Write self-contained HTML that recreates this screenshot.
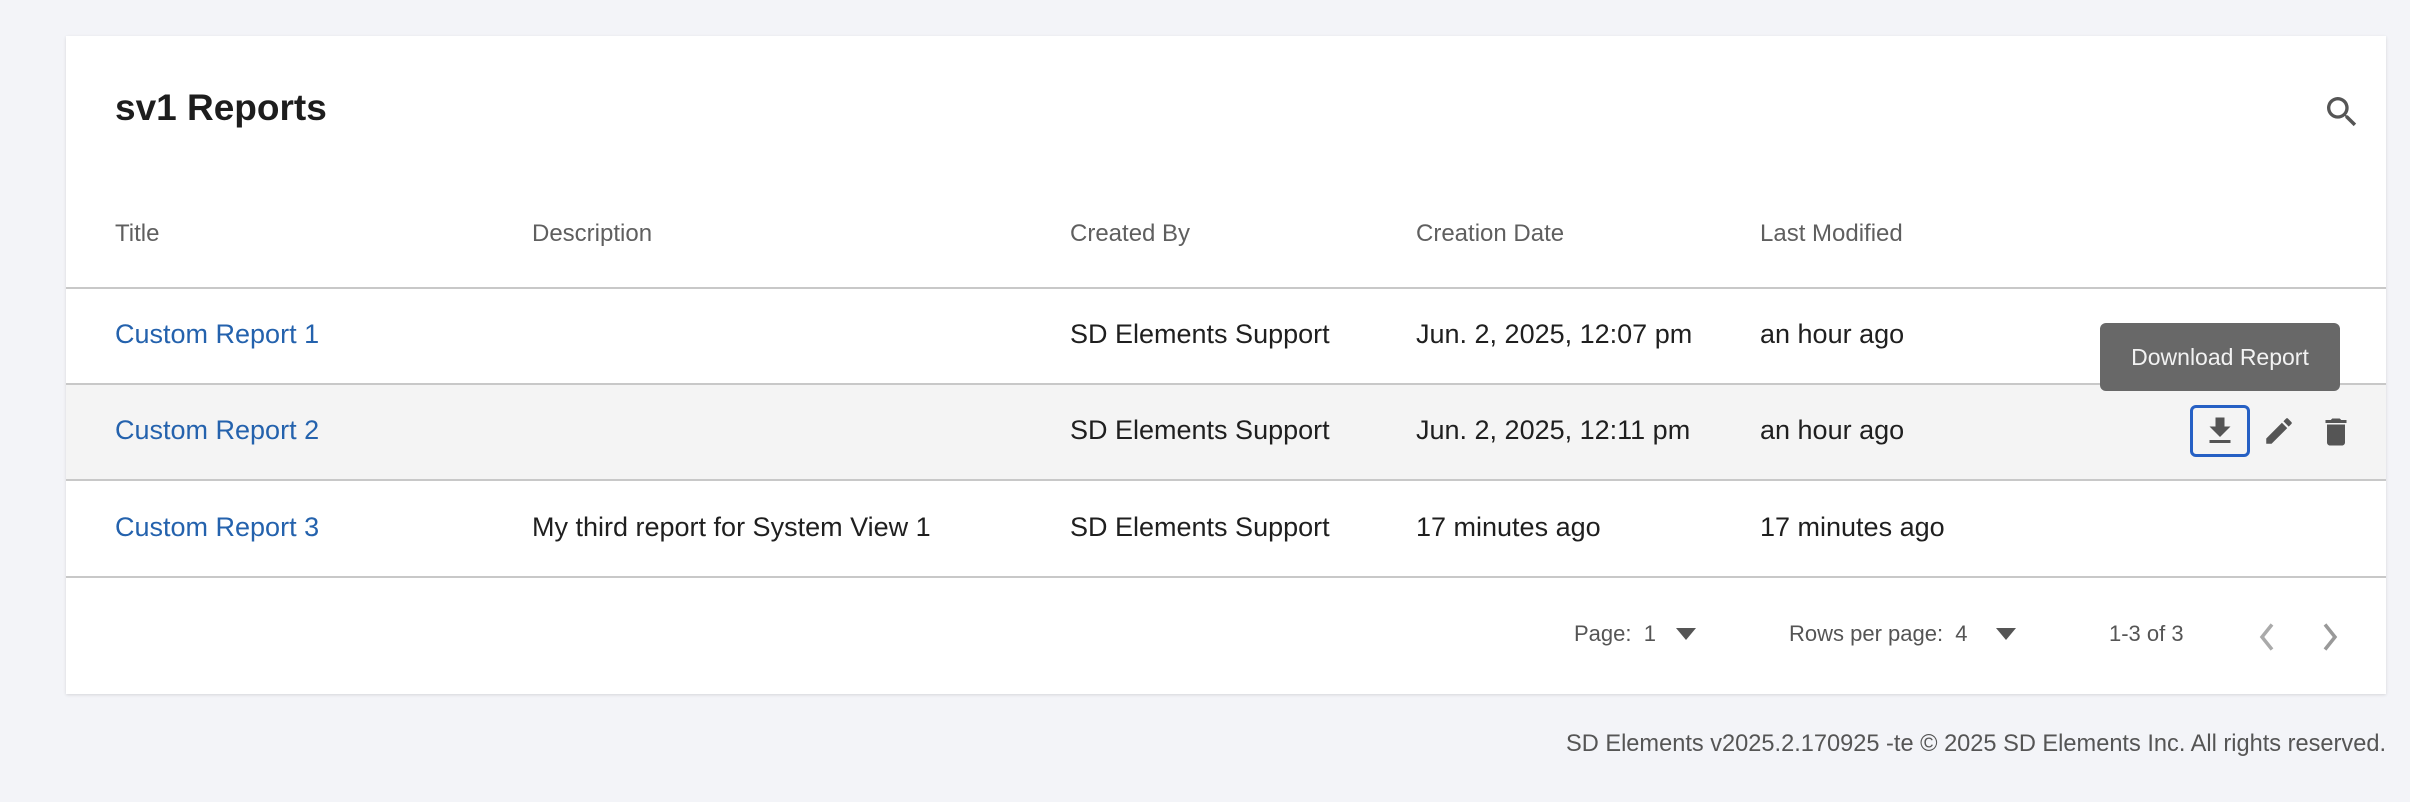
<!DOCTYPE html>
<html><head><meta charset="utf-8"><style>
*{margin:0;padding:0;box-sizing:border-box}
body{width:2410px;height:802px;background:#f3f4f8;font-family:"Liberation Sans",Arial,sans-serif;position:relative;overflow:hidden}
.card{position:absolute;left:66px;top:36px;width:2320px;height:658px;background:#fff;box-shadow:0 1px 3px rgba(0,0,0,.12)}
.a{position:absolute;white-space:nowrap}
.h{font-size:24px;color:#5f5f5f;top:184px}
.line{position:absolute;left:0;width:2320px;height:2px;background:#c8c8c8}
.t{font-size:27px;color:#1f1f1f}
.lk{color:#2462ad}
</style></head><body>
<div class="card">
  <div class="a" style="left:49px;top:51px;font-size:37px;font-weight:bold;color:#1d1d1d">sv1 Reports</div>
  <svg class="a" style="left:2256px;top:56px" width="40" height="40" viewBox="0 0 24 24"><path fill="#555" d="M15.5 14h-.79l-.28-.27A6.47 6.47 0 0 0 16 9.5 6.5 6.5 0 1 0 9.5 16c1.610 0 3.09-.59 4.23-1.57l.27.28v.79l5 4.99L20.490 19l-4.99-5zm-6 0C7.01 14 5 11.99 5 9.5S7.01 5 9.5 5 14 7.01 14 9.5 11.99 14 9.5 14z"/></svg>
  <div class="a h" style="left:49px">Title</div>
  <div class="a h" style="left:466px">Description</div>
  <div class="a h" style="left:1004px">Created By</div>
  <div class="a h" style="left:1350px">Creation Date</div>
  <div class="a h" style="left:1694px">Last Modified</div>
  <div class="line" style="top:251px"></div>
  <div style="position:absolute;left:0;top:348px;width:2320px;height:96px;background:#f4f4f4"></div>
  <div class="line" style="top:347px"></div>
  <div class="line" style="top:443px"></div>
  <div class="line" style="top:540px"></div>

  <div class="a t lk" style="left:49px;top:283px">Custom Report 1</div>
  <div class="a t" style="left:1004px;top:283px">SD Elements Support</div>
  <div class="a t" style="left:1350px;top:283px">Jun. 2, 2025, 12:07 pm</div>
  <div class="a t" style="left:1694px;top:283px">an hour ago</div>

  <div class="a t lk" style="left:49px;top:379px">Custom Report 2</div>
  <div class="a t" style="left:1004px;top:379px">SD Elements Support</div>
  <div class="a t" style="left:1350px;top:379px">Jun. 2, 2025, 12:11 pm</div>
  <div class="a t" style="left:1694px;top:379px">an hour ago</div>

  <div class="a t lk" style="left:49px;top:476px">Custom Report 3</div>
  <div class="a t" style="left:466px;top:476px">My third report for System View 1</div>
  <div class="a t" style="left:1004px;top:476px">SD Elements Support</div>
  <div class="a t" style="left:1350px;top:476px">17 minutes ago</div>
  <div class="a t" style="left:1694px;top:476px">17 minutes ago</div>

  <div class="a" style="left:2034px;top:287px;width:240px;height:68px;background:#686868;border-radius:6px;color:#f2f2f2;font-size:23px;line-height:68px;text-align:center">Download Report</div>
  <div class="a" style="left:2124px;top:369px;width:60px;height:52px;border:3px solid #2660c4;border-radius:6px"></div>
  <svg class="a" style="left:2136px;top:377px" width="36" height="36" viewBox="0 0 24 24"><path fill="#555" d="M19 9h-4V3H9v6H5l7 7 7-7zM5 18v2h14v-2H5z"/></svg>
  <svg class="a" style="left:2196px;top:378px" width="34" height="34" viewBox="0 0 24 24"><path fill="#555" d="M3 17.25V21h3.75L17.81 9.94l-3.75-3.75L3 17.25zM20.71 7.04a1 1 0 0 0 0-1.41l-2.34-2.34a1 1 0 0 0-1.41 0l-1.83 1.83 3.750 3.75 1.83-1.83z"/></svg>
  <svg class="a" style="left:2252px;top:378px" width="36" height="36" viewBox="0 0 24 24"><path fill="#555" d="M6 19c0 1.1.9 2 2 2h8c1.1 0 2-.9 2-2V7H6v12zM19 4h-3.5l-1-1h-5l-1 1H5v2h14V4z"/></svg>

  <div class="a" style="left:1508px;top:585px;font-size:22px;color:#555">Page:&nbsp; 1</div>
  <svg class="a" style="left:1610px;top:592px" width="20" height="14" viewBox="0 0 10 7"><path fill="#555" d="M0 0h10L5 6z"/></svg>
  <div class="a" style="left:1723px;top:585px;font-size:22px;color:#555">Rows per page:&nbsp; 4</div>
  <svg class="a" style="left:1930px;top:592px" width="20" height="14" viewBox="0 0 10 7"><path fill="#555" d="M0 0h10L5 6z"/></svg>
  <div class="a" style="left:2043px;top:585px;font-size:22px;color:#555">1-3 of 3</div>
  <svg class="a" style="left:2189px;top:586px" width="24" height="30" viewBox="0 0 8 12"><path fill="none" stroke="#aaa" stroke-width="1.4" d="M6 1 2 6l4 5"/></svg>
  <svg class="a" style="left:2252px;top:586px" width="24" height="30" viewBox="0 0 8 12"><path fill="none" stroke="#999" stroke-width="1.4" d="M2 1l4 5-4 5"/></svg>
</div>
<div class="a" style="right:24px;top:731px;font-size:23.6px;color:#555">SD Elements v2025.2.170925 -te © 2025 SD Elements Inc. All rights reserved.</div>
</body></html>
